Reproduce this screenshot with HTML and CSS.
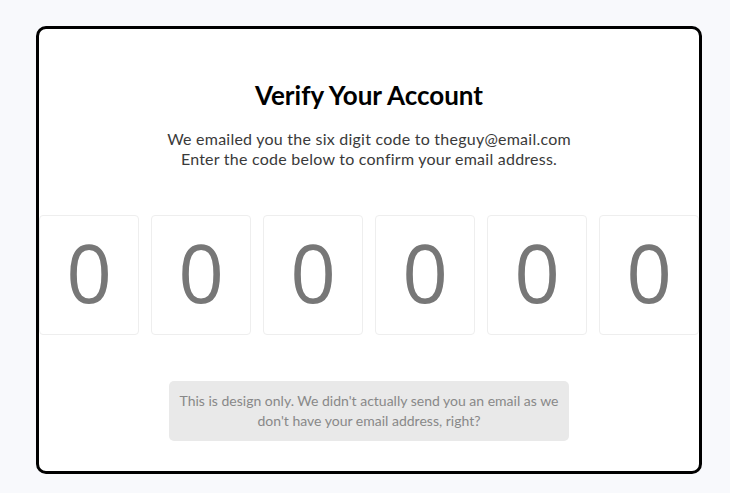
FILE: index.html
```html
<!DOCTYPE html>
<html lang="en">
<head>
<meta charset="utf-8">
<title>Verify Your Account</title>
<link rel="stylesheet" href="styles.css">
</head>
<body>
<main class="card">
  <h1 class="title">Verify Your Account</h1>
  <p class="intro">We emailed you the six digit code to theguy@email.com<br>Enter the code below to confirm your email address.</p>
  <div class="code">
    <input class="digit" type="text" maxlength="1" value="0">
    <input class="digit" type="text" maxlength="1" value="0">
    <input class="digit" type="text" maxlength="1" value="0">
    <input class="digit" type="text" maxlength="1" value="0">
    <input class="digit" type="text" maxlength="1" value="0">
    <input class="digit" type="text" maxlength="1" value="0">
  </div>
  <p class="note">This is design only. We didn't actually send you an email as we don't have your email address, right?</p>
</main>
</body>
</html>
```
FILE: styles.css
```css
* { box-sizing: border-box; }
html, body { margin: 0; }
body {
  background: #f8f9fc;
  font-family: Lato, "Liberation Sans", sans-serif;
  padding: 26px 0 0 36px;
  height: 493px;
}
.card {
  width: 666px;
  height: 448px;
  background: #fff;
  border: 3px solid #000;
  border-radius: 10px;
  padding-top: 51px;
  display: flex;
  flex-direction: column;
  align-items: center;
}
.title {
  margin: 0;
  font-size: 26px;
  line-height: 31px;
  font-weight: 700;
  color: #000;
}
.intro {
  margin: 18px 0 0;
  font-size: 16px;
  line-height: 20px;
  letter-spacing: 0.24px;
  color: #3a3a3a;
  text-align: center;
}
.code {
  margin-top: 46px;
  display: flex;
  gap: 12px;
  width: 660px;
}
.digit {
  width: 100px;
  height: 120px;
  border: 1px solid #eee;
  border-radius: 4px;
  background: #fff;
  font-family: "Open Sans", sans-serif;
  font-size: 80px;
  color: #777;
  text-align: center;
  padding: 0 0 7px;
  outline: none;
}
.note {
  margin: 46px 0 0;
  width: 400px;
  padding: 10px 10px;
  background: #e9e9e9;
  border-radius: 5px;
  font-size: 14px;
  line-height: 20px;
  color: #888;
  text-align: center;
}
```
